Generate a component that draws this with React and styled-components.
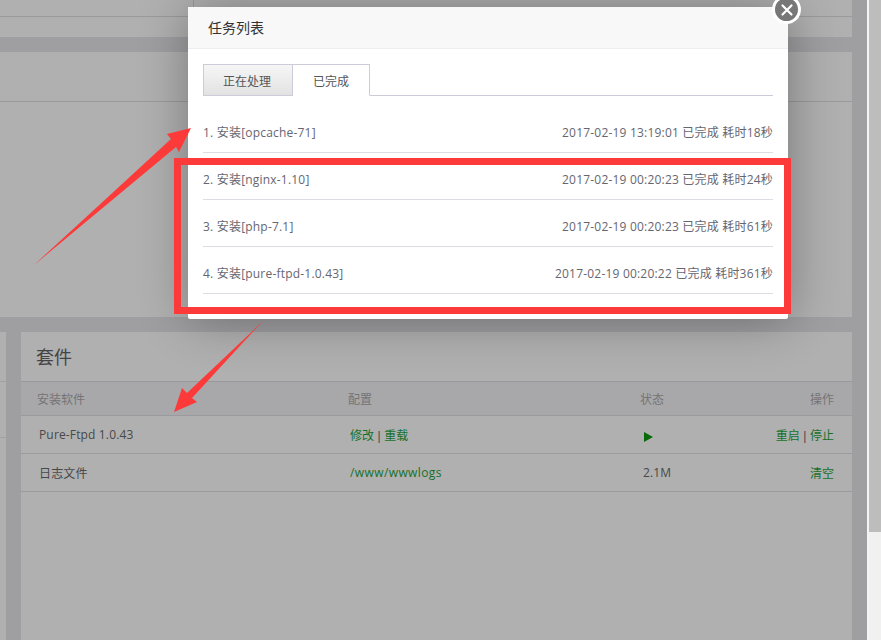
import React from "react";
import styled, { createGlobalStyle } from "styled-components";

const Global = createGlobalStyle`
  html, body { margin: 0; padding: 0; height: 640px; overflow: hidden; }
  body { background: #9f9fa2; font-family: "Open Sans", "Noto Sans CJK SC", sans-serif; font-size: 12px; color: #555; }
  * { box-sizing: border-box; }
`;

const Page = styled.div`
  position: relative;
  width: 881px;
  height: 640px;
  display: grid;
  grid-template-columns: 867px 2px 12px;
  overflow: hidden;
`;
const Main = styled.main`
  display: flex;
  flex-direction: column;
  gap: 15px;
  padding-right: 15px;
  height: 640px;
  overflow: hidden;
`;
const Divider = styled.div`
  background: #f4f4f4;
`;
const Track = styled.div`
  background: #f1f1f1;
`;
const Thumb = styled.div`
  height: 532px;
  background: #bdbdbd;
`;
const Panel = styled.section`
  background: #b0b0b0;
  height: ${p => p.$h}px;
  flex: none;
`;
const TopCell = styled.div`
  width: 194px;
  height: 16px;
  border-right: 1px solid #9a9a9c;
`;
const Line = styled.div`
  height: 1px;
  background: #9a9a9c;
  margin-top: ${p => p.$top}px;
`;
const LowerRow = styled.div`
  display: grid;
  grid-template-columns: 6px 831px;
  gap: 15px;
`;
const PanelTall = styled.section`
  background: #b0b0b0;
  height: 308px;
`;
const SideLine = styled.div`
  height: 1px;
  background: #a0a0a2;
  margin-top: ${p => p.$top}px;
`;
const PanelTitle = styled.h3`
  margin: 0;
  height: 50px;
  padding-left: 15px;
  font-size: 18px;
  font-weight: 400;
  line-height: 50px;
  color: #444;
  border-bottom: 1px solid #99999b;
`;
const Table = styled.table`
  width: 100%;
  border-collapse: separate;
  border-spacing: 0;
  table-layout: fixed;
`;
const Th = styled.th`
  height: 34px;
  padding: 0 ${p => p.$right ? "18px" : "0"} 0 ${p => p.$pad || 0}px;
  background: #a8a8aa;
  color: #747476;
  font-weight: 400;
  font-size: 12px;
  text-align: ${p => p.$right ? "right" : "left"};
  border-bottom: 1px solid #9b9b9d;
`;
const Td = styled.td`
  height: 38px;
  padding: 0 ${p => p.$right ? "18px" : "0"} 0 ${p => p.$pad || 0}px;
  color: #484848;
  letter-spacing: .15px;
  text-align: ${p => p.$right ? "right" : "left"};
  border-bottom: 1px solid #9b9b9d;
`;
const GreenLink = styled.a`
  color: #16702a;
  letter-spacing: ${p => p.$wide ? ".4px" : "0"};
`;
const Sep = styled.span`
  font-family: "Liberation Sans", sans-serif;
  color: #484848;
`;
const Play = styled.span`
  display: inline-block;
  vertical-align: middle;
  width: 0;
  height: 0;
  margin: 3px 0 0 1px;
  border-left: 9px solid #0a6a0a;
  border-top: 5.5px solid transparent;
  border-bottom: 5.5px solid transparent;
`;
const Overlay = styled.svg`
  position: absolute;
  inset: 0;
  width: 881px;
  height: 640px;
  pointer-events: none;
  z-index: 3;
`;
const Modal = styled.div`
  position: absolute;
  left: 188px;
  top: 7px;
  width: 600px;
  height: 312px;
  background: #fff;
  border-radius: 2px;
  box-shadow: 1px 1px 50px rgba(0, 0, 0, .33);
  z-index: 2;
`;
const ModalHead = styled.header`
  height: 42px;
  padding-left: 20px;
  background: #f8f8f8;
  border-bottom: 1px solid #eee;
  font-size: 14px;
  line-height: 41px;
  color: #333;
`;
const Close = styled.button`
  position: absolute;
  top: -12px;
  right: -13px;
  width: 29px;
  height: 29px;
  padding: 0;
  display: flex;
  align-items: center;
  justify-content: center;
  background: #777;
  border: 3px solid #fff;
  border-radius: 50%;
`;
const Body = styled.div`
  padding: 15px 15px 0;
`;
const Tabs = styled.div`
  display: flex;
  height: 32px;
  border-bottom: 1px solid #ccccd8;
`;
const Tab = styled.div`
  height: 32px;
  width: ${p => p.$active ? 77 : 90}px;
  padding-right: ${p => p.$active ? 0 : 2}px;
  text-align: center;
  line-height: 33px;
  font-size: 12px;
  color: #555;
  border: 1px solid #ccccd8;
  border-left: ${p => p.$active ? "none" : "1px solid #ccccd8"};
  border-bottom: ${p => p.$active ? "1px solid #fff" : "1px solid #ccccd8"};
  background: ${p => p.$active ? "#fff" : "linear-gradient(#f6f6f6, #e2e2e2)"};
`;
const Tasks = styled.ul`
  list-style: none;
  margin: 10px 0 0;
  padding: 0;
`;
const Task = styled.li`
  height: 47px;
  display: flex;
  justify-content: space-between;
  align-items: center;
  padding-top: 5px;
  border-bottom: 1px solid #dcdce6;
  color: #666670;
  font-size: 12px;
  letter-spacing: .2px;
`;

const tasks = [
  ["1. 安装[opcache-71]", "2017-02-19 13:19:01 已完成 耗时18秒"],
  ["2. 安装[nginx-1.10]", "2017-02-19 00:20:23 已完成 耗时24秒"],
  ["3. 安装[php-7.1]", "2017-02-19 00:20:23 已完成 耗时61秒"],
  ["4. 安装[pure-ftpd-1.0.43]", "2017-02-19 00:20:22 已完成 耗时361秒"],
];

export default function App() {
  return (
    <Page>
      <Global />
      <Main>
        <Panel $h={37}><TopCell /><Line $top={0} /></Panel>
        <Panel $h={265}><Line $top={49} /></Panel>
        <LowerRow>
          <PanelTall>
            <SideLine $top={49} />
            <SideLine $top={55} />
          </PanelTall>
          <PanelTall>
            <PanelTitle>套件</PanelTitle>
            <Table>
              <colgroup>
                <col style={{ width: "327px" }} />
                <col style={{ width: "292px" }} />
                <col style={{ width: "100px" }} />
                <col />
              </colgroup>
              <thead>
                <tr>
                  <Th $pad={16}>安装软件</Th>
                  <Th>配置</Th>
                  <Th>状态</Th>
                  <Th $right>操作</Th>
                </tr>
              </thead>
              <tbody>
                <tr>
                  <Td $pad={18}>Pure-Ftpd 1.0.43</Td>
                  <Td $pad={2}><GreenLink>修改</GreenLink><Sep> | </Sep><GreenLink>重载</GreenLink></Td>
                  <Td $pad={3}><Play /></Td>
                  <Td $right><GreenLink>重启</GreenLink><Sep> | </Sep><GreenLink>停止</GreenLink></Td>
                </tr>
                <tr>
                  <Td $pad={18}>日志文件</Td>
                  <Td $pad={2}><GreenLink $wide>/www/wwwlogs</GreenLink></Td>
                  <Td $pad={3}>2.1M</Td>
                  <Td $right><GreenLink>清空</GreenLink></Td>
                </tr>
              </tbody>
            </Table>
          </PanelTall>
        </LowerRow>
      </Main>
      <Divider />
      <Track><Thumb /></Track>

      <Modal>
        <ModalHead>任务列表</ModalHead>
        <Close aria-label="关闭">
          <svg width="14" height="14" viewBox="0 0 14 14">
            <path d="M2.5 2.5l9 9M11.5 2.5l-9 9" stroke="#fff" strokeWidth="2.2" strokeLinecap="round" />
          </svg>
        </Close>
        <Body>
          <Tabs>
            <Tab>正在处理</Tab>
            <Tab $active>已完成</Tab>
          </Tabs>
          <Tasks>
            {tasks.map(([name, info]) => (
              <Task key={name}>
                <span>{name}</span>
                <span>{info}</span>
              </Task>
            ))}
          </Tasks>
        </Body>
      </Modal>

      <Overlay viewBox="0 0 881 640">
        <rect x="177.5" y="161.5" width="610" height="149" fill="none" stroke="#fd3a3a" strokeWidth="7" />
        <polygon points="34,265 171,139 167,134 191,128 179,152 176,147" fill="#fd3a3a" />
        <polygon points="263,321 192,398 197,402 174,412 182,388 187,393" fill="#fd3a3a" />
      </Overlay>
    </Page>
  );
}
